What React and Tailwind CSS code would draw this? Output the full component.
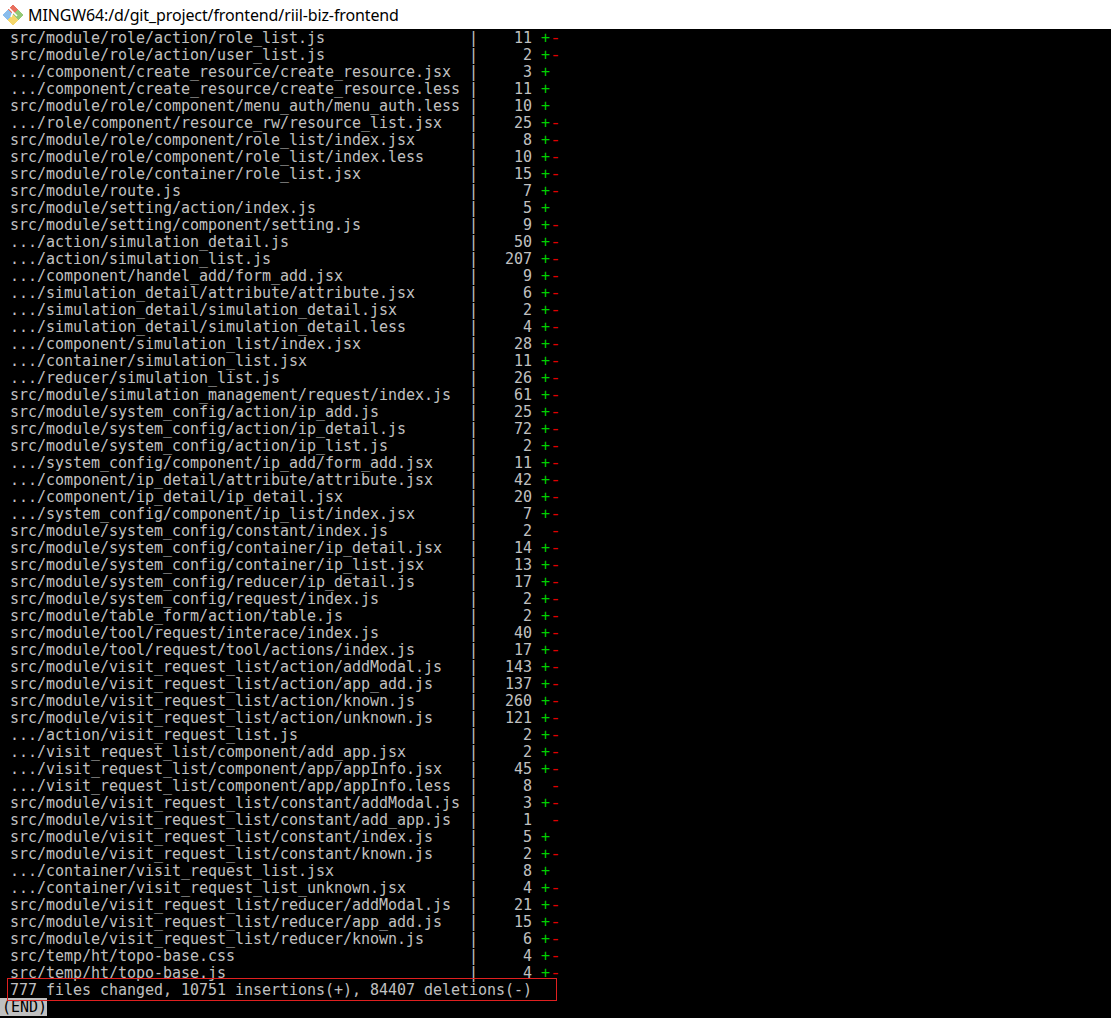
const rows = [
  ["src/module/role/action/role_list.js", 11, "+-"],
  ["src/module/role/action/user_list.js", 2, "+-"],
  [".../component/create_resource/create_resource.jsx", 3, "+"],
  [".../component/create_resource/create_resource.less", 11, "+"],
  ["src/module/role/component/menu_auth/menu_auth.less", 10, "+"],
  [".../role/component/resource_rw/resource_list.jsx", 25, "+-"],
  ["src/module/role/component/role_list/index.jsx", 8, "+-"],
  ["src/module/role/component/role_list/index.less", 10, "+-"],
  ["src/module/role/container/role_list.jsx", 15, "+-"],
  ["src/module/route.js", 7, "+-"],
  ["src/module/setting/action/index.js", 5, "+"],
  ["src/module/setting/component/setting.js", 9, "+-"],
  [".../action/simulation_detail.js", 50, "+-"],
  [".../action/simulation_list.js", 207, "+-"],
  [".../component/handel_add/form_add.jsx", 9, "+-"],
  [".../simulation_detail/attribute/attribute.jsx", 6, "+-"],
  [".../simulation_detail/simulation_detail.jsx", 2, "+-"],
  [".../simulation_detail/simulation_detail.less", 4, "+-"],
  [".../component/simulation_list/index.jsx", 28, "+-"],
  [".../container/simulation_list.jsx", 11, "+-"],
  [".../reducer/simulation_list.js", 26, "+-"],
  ["src/module/simulation_management/request/index.js", 61, "+-"],
  ["src/module/system_config/action/ip_add.js", 25, "+-"],
  ["src/module/system_config/action/ip_detail.js", 72, "+-"],
  ["src/module/system_config/action/ip_list.js", 2, "+-"],
  [".../system_config/component/ip_add/form_add.jsx", 11, "+-"],
  [".../component/ip_detail/attribute/attribute.jsx", 42, "+-"],
  [".../component/ip_detail/ip_detail.jsx", 20, "+-"],
  [".../system_config/component/ip_list/index.jsx", 7, "+-"],
  ["src/module/system_config/constant/index.js", 2, "-"],
  ["src/module/system_config/container/ip_detail.jsx", 14, "+-"],
  ["src/module/system_config/container/ip_list.jsx", 13, "+-"],
  ["src/module/system_config/reducer/ip_detail.js", 17, "+-"],
  ["src/module/system_config/request/index.js", 2, "+-"],
  ["src/module/table_form/action/table.js", 2, "+-"],
  ["src/module/tool/request/interace/index.js", 40, "+-"],
  ["src/module/tool/request/tool/actions/index.js", 17, "+-"],
  ["src/module/visit_request_list/action/addModal.js", 143, "+-"],
  ["src/module/visit_request_list/action/app_add.js", 137, "+-"],
  ["src/module/visit_request_list/action/known.js", 260, "+-"],
  ["src/module/visit_request_list/action/unknown.js", 121, "+-"],
  [".../action/visit_request_list.js", 2, "+-"],
  [".../visit_request_list/component/add_app.jsx", 2, "+-"],
  [".../visit_request_list/component/app/appInfo.jsx", 45, "+-"],
  [".../visit_request_list/component/app/appInfo.less", 8, "-"],
  ["src/module/visit_request_list/constant/addModal.js", 3, "+-"],
  ["src/module/visit_request_list/constant/add_app.js", 1, "-"],
  ["src/module/visit_request_list/constant/index.js", 5, "+"],
  ["src/module/visit_request_list/constant/known.js", 2, "+-"],
  [".../container/visit_request_list.jsx", 8, "+"],
  [".../container/visit_request_list_unknown.jsx", 4, "+-"],
  ["src/module/visit_request_list/reducer/addModal.js", 21, "+-"],
  ["src/module/visit_request_list/reducer/app_add.js", 15, "+-"],
  ["src/module/visit_request_list/reducer/known.js", 6, "+-"],
  ["src/temp/ht/topo-base.css", 4, "+-"],
  ["src/temp/ht/topo-base.js", 4, "+-"],
];

const GitIcon = () => (
  <svg width="22" height="22" viewBox="0 0 22 22">
    <path d="M11 1 L16 6 L11 11 L6 6 Z" fill="#e8705f" stroke="#e8705f" strokeWidth="1" strokeLinejoin="round" />
    <path d="M6 6 L11 11 L6 16 L1 11 Z" fill="#8abdec" stroke="#8abdec" strokeWidth="1" strokeLinejoin="round" />
    <path d="M16 6 L21 11 L16 16 L11 11 Z" fill="#93c977" stroke="#93c977" strokeWidth="1" strokeLinejoin="round" />
    <path d="M11 11 L16 16 L11 21 L6 16 Z" fill="#f5d76a" stroke="#f5d76a" strokeWidth="1" strokeLinejoin="round" />
    <path d="M7 4 L11 8 L15 12 M11 8 L9 13" fill="none" stroke="#ffffff" strokeWidth="1.6" />
  </svg>
);

const App = () => {
  return (
    <div className="w-[1111px] h-[1018px] bg-black overflow-hidden">
      <div className="h-[29px] bg-white flex items-center gap-[4px] pl-[2px] text-[16px] tracking-[-0.12px] text-black font-['Noto_Sans',sans-serif]">
        <GitIcon />
        <span>MINGW64:/d/git_project/frontend/riil-biz-frontend</span>
      </div>
      <div className="pt-[1px] font-['DejaVu_Sans_Mono',monospace] text-[15px] tracking-[-0.03px] leading-[17px] text-[#c0c0c0] whitespace-pre">
        <div className="pl-[10px]">
          {rows.map(([name, count, signs]) => (
            <div key={name} className="h-[17px] flex">
              <span className="w-[459px]">{name}</span>
              <span className="w-[9px]">|</span>
              <span className="w-[54px] text-right">{count}</span>
              <span className="ml-[9px] flex">
                <span className="w-[9px] text-[#00d000]">{signs.includes("+") ? "+" : " "}</span>
                {signs.includes("-") && <span className="ml-[1px] w-[9px] scale-x-[1.2] text-[#e00000]">-</span>}
              </span>
            </div>
          ))}
        </div>
        <div className="relative h-[17px] pl-[10px]">
          777 files changed, 10751 insertions(+), 84407 deletions(-)
          <div className="absolute left-[7px] top-[-4px] w-[550px] h-[23px] border border-[#e02020]" />
        </div>
        <div className="h-[17px]">
          <span className="bg-[#c0c0c0] text-black pl-[2px]">(END)</span>
        </div>
      </div>
    </div>
  );
};

export default App;
